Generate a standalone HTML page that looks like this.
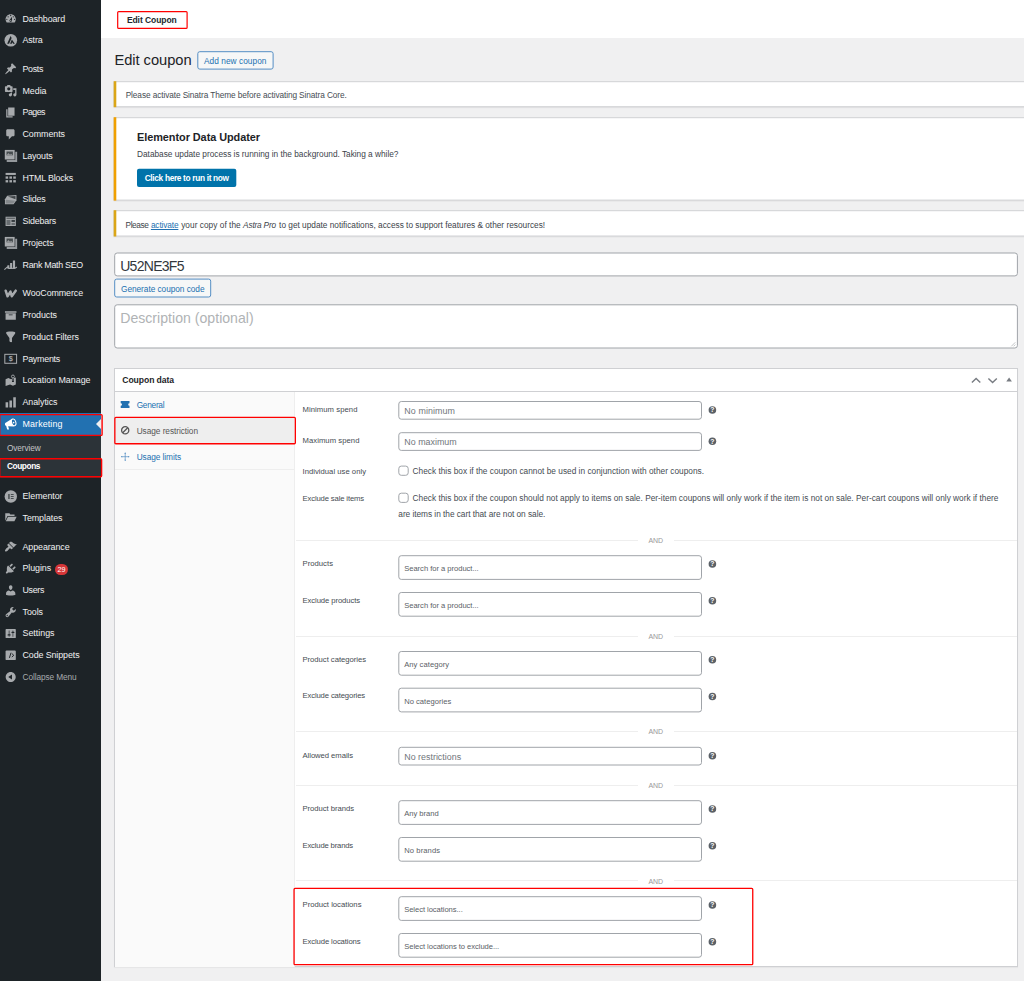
<!DOCTYPE html><html><head><meta charset="utf-8"><title>Edit coupon</title><style>
*{margin:0;padding:0;box-sizing:border-box}
html,body{width:1024px;height:981px;overflow:hidden;background:#f0f0f1;font-family:"Liberation Sans",sans-serif;}
.b{position:absolute}
.t{position:absolute;white-space:nowrap;line-height:1;font-family:"Liberation Sans",sans-serif;transform-origin:0 50%}
svg{position:absolute;overflow:visible}
</style></head><body>
<div class="b" style="left:0px;top:0px;width:101px;height:981px;background:#1d2327"></div>
<div class="b" style="left:101px;top:0px;width:923px;height:37.5px;background:#fff"></div>
<div class="b" style="left:0px;top:413.2px;width:101px;height:22.3px;background:#2271b1"></div>
<div class="b" style="left:0px;top:435.5px;width:101px;height:42px;background:#2c3338"></div>
<div class="b" style="left:54.9px;top:563.5px;width:13.2px;height:11.5px;background:#d63638;border-radius:6px"></div>
<div class="b" style="left:114px;top:367.7px;width:904px;height:599.8px;background:#fff;border:1px solid #cfd0d3;box-shadow:0 1px 1px rgba(0,0,0,.04)"></div>
<div class="b" style="left:115px;top:391px;width:902px;height:1px;background:#cfd0d3"></div>
<div class="b" style="left:115px;top:392px;width:180px;height:574.5px;background:#fafafa;border-right:1px solid #eee"></div>
<div class="b" style="left:115px;top:417px;width:180px;height:1px;background:#eee"></div>
<div class="b" style="left:115px;top:417.5px;width:180px;height:26.5px;background:#eee"></div>
<div class="b" style="left:115px;top:469px;width:179px;height:1px;background:#eee"></div>
<div class="b" style="left:296px;top:539.7px;width:721px;height:1px;background:#eee"></div>
<div class="b" style="left:638.2px;top:537.2px;width:35.7px;height:7px;background:#fff"></div>
<div class="b" style="left:296px;top:635.5px;width:721px;height:1px;background:#eee"></div>
<div class="b" style="left:638.2px;top:633px;width:35.7px;height:7px;background:#fff"></div>
<div class="b" style="left:296px;top:731.0px;width:721px;height:1px;background:#eee"></div>
<div class="b" style="left:638.2px;top:728.5px;width:35.7px;height:7px;background:#fff"></div>
<div class="b" style="left:296px;top:784.7px;width:721px;height:1px;background:#eee"></div>
<div class="b" style="left:638.2px;top:782.2px;width:35.7px;height:7px;background:#fff"></div>
<div class="b" style="left:296px;top:880.2px;width:721px;height:1px;background:#eee"></div>
<div class="b" style="left:638.2px;top:877.7px;width:35.7px;height:7px;background:#fff"></div>
<svg style="left:0;top:0" width="1024" height="981" viewBox="0 0 1024 981"><svg overflow="visible" x="96" y="418.9" width="5" height="10.4" viewBox="0 0 5 10"><path d="M5 0 L0 5 L5 10 Z" fill="#f0f0f1"/></svg><rect x="-0.30" y="414.60" width="102.40" height="20.80" rx="1" fill="none" stroke="#f00" stroke-width="1.4"/><rect x="-0.30" y="458.70" width="101.90" height="18.10" rx="1" fill="none" stroke="#f00" stroke-width="1.4"/><svg overflow="visible" x="4.3" y="12.30" width="12.8" height="12.8" viewBox="0 0 20 20"><path d="M3.76 16h12.48c1.1-1.37 1.76-3.11 1.76-5 0-4.42-3.58-8-8-8s-8 3.58-8 8c0 1.89.66 3.63 1.76 5zM10 4c.55 0 1 .45 1 1s-.45 1-1 1-1-.45-1-1 .45-1 1-1zM6 6c.55 0 1 .45 1 1s-.45 1-1 1-1-.45-1-1 .45-1 1-1zm8 0c.55 0 1 .45 1 1s-.45 1-1 1-1-.45-1-1 .45-1 1-1zm-5.37 5.55L12 7v6c0 1.1-.9 2-2 2s-2-.9-2-2c0-.57.24-1.08.63-1.45zM4 10c.55 0 1 .45 1 1s-.45 1-1 1-1-.45-1-1 .45-1 1-1zm12 0c.55 0 1 .45 1 1s-.45 1-1 1-1-.45-1-1 .45-1 1-1zm-5 3c0-.55-.45-1-1-1s-1 .45-1 1 .45 1 1 1 1-.45 1-1z" fill="#a7aaad" fill-rule="evenodd"/></svg><svg overflow="visible" x="4.5" y="33.90" width="12.6" height="12.6" viewBox="0 0 20 20"><circle cx="10" cy="10" r="10" fill="#a7aaad"/><path d="M9.7 3.3 L4.2 15.5 h3.1 l4-9z M11.7 9 l-2.9 6.500 h2.700 l1-2.300 1.100 2.300 h2.900z" fill="#1d2327"/></svg><svg overflow="visible" x="4.3" y="62.40" width="12.8" height="12.8" viewBox="0 0 20 20"><path d="M10.44 3.02l1.82-1.82 6.36 6.35-1.83 1.82c-1.05-.68-2.48-.57-3.41.36l-.75.75c-.92.93-1.04 2.35-.35 3.41l-1.83 1.82-2.41-2.41-2.8 2.79c-.42.42-3.38 2.71-3.8 2.29s1.86-3.39 2.28-3.81l2.79-2.79L4.1 9.36l1.83-1.82c1.05.69 2.48.57 3.4-.36l.75-.75c.93-.92 1.05-2.35.36-3.41z" fill="#a7aaad" fill-rule="evenodd"/></svg><svg overflow="visible" x="4.3" y="84.30" width="12.8" height="12.8" viewBox="0 0 20 20"><path d="M13 11V4c0-.55-.45-1-1-1h-1.67L9 1H5L3.67 3H2c-.55 0-1 .45-1 1v7c0 .55.45 1 1 1h10c.55 0 1-.45 1-1zM7 4.5c1.38 0 2.5 1.12 2.5 2.5S8.38 9.5 7 9.5 4.5 8.38 4.5 7 5.62 4.5 7 4.5zM14 6h5v10.5c0 1.38-1.12 2.5-2.5 2.5S14 17.88 14 16.5s1.120-2.5 2.5-2.5c.17 0 .34.02.5.05V9h-3V6zm-4 8.05V13h2v3.5c0 1.38-1.12 2.5-2.5 2.5S7 17.88 7 16.5 8.12 14 9.5 14c.17 0 .34.02.5.05z" fill="#a7aaad" fill-rule="evenodd"/></svg><svg overflow="visible" x="4.3" y="106.10" width="12.8" height="12.8" viewBox="0 0 20 20"><path d="M6 15V2h10v13H6zm-1 1h8v2H3V5h2v11z" fill="#a7aaad" fill-rule="evenodd"/></svg><svg overflow="visible" x="4.3" y="127.90" width="12.8" height="12.8" viewBox="0 0 20 20"><path d="M5 2h9c1.1 0 2 .9 2 2v7c0 1.1-.9 2-2 2h-2l-5 5v-5H5c-1.1 0-2-.9-2-2V4c0-1.1.9-2 2-2z" fill="#a7aaad" fill-rule="evenodd"/></svg><svg overflow="visible" x="4.6" y="149.60" width="12.8" height="12.8" viewBox="0 0 20 20"><path d="M16.600 3.300 h3 v16 H3.300 v-3 h13.300z" fill="#94989c"/><path d="M.3 .5 h15.400 v15 H.3z" fill="#a7aaad"/><path d="M3 3 h10 v6 H3z" fill="#1d2327" opacity=".7"/><path d="M3 9 L6 5.500 L8.500 8 L10 6.500 L13 9z" fill="#a7aaad" opacity=".8"/></svg><svg overflow="visible" x="4.3" y="171.30" width="12.8" height="12.8" viewBox="0 0 20 20"><rect x="2" y="2.5" width="16" height="3.2" fill="#a7aaad"/><rect x="2" y="8" width="4" height="3.6" fill="#a7aaad"/><rect x="8" y="8" width="4" height="3.6" fill="#a7aaad"/><rect x="14" y="8" width="4" height="3.6" fill="#a7aaad"/><rect x="2" y="13.8" width="4" height="3.6" fill="#a7aaad"/><rect x="8" y="13.8" width="4" height="3.6" fill="#a7aaad"/><rect x="14" y="13.8" width="4" height="3.6" fill="#a7aaad"/></svg><svg overflow="visible" x="4.3" y="193.10" width="12.8" height="12.8" viewBox="0 0 20 20"><path d="M1 9.5 L4.5 4 L19 3 V11 L14.5 17.5 H1z" fill="#a7aaad"/><path d="M5.5 5.3 L17.5 4.6 V9.8 L10 7z" fill="#1d2327" opacity=".75"/><path d="M2.3 10.5 V16.3 H13.8 L17 11.8z" fill="#1d2327" opacity=".25"/></svg><svg overflow="visible" x="4.3" y="214.80" width="12.8" height="12.8" viewBox="0 0 20 20"><rect x="2" y="3" width="16" height="14.5" fill="#a7aaad"/><rect x="3.4" y="4.4" width="13.2" height="2" fill="#1d2327" opacity=".55"/><rect x="3.4" y="8" width="6.3" height="8" fill="#1d2327" opacity=".45"/><rect x="11.2" y="8" width="5.4" height="3.2" fill="#1d2327" opacity=".8"/><rect x="11.2" y="12.6" width="5.4" height="3.4" fill="#1d2327" opacity=".45"/></svg><svg overflow="visible" x="4.6" y="236.60" width="12.8" height="12.8" viewBox="0 0 20 20"><path d="M16.600 3.300 h3 v16 H3.300 v-3 h13.300z" fill="#94989c"/><path d="M.3 .5 h15.400 v15 H.3z" fill="#a7aaad"/><path d="M3 3 h10 v6 H3z" fill="#1d2327" opacity=".7"/><path d="M3 9 L6 5.500 L8.500 8 L10 6.500 L13 9z" fill="#a7aaad" opacity=".8"/></svg><svg overflow="visible" x="4.2" y="258.30" width="12.8" height="12.8" viewBox="0 0 20 20"><path d="M5 11h3v5.500H5z M9.200 7.500h3.200v9H9.200z M13.600 3.500h3.400v13h-3.400z" fill="#a7aaad"/><path d="M.3 17.800 L5 13.500 L8 15.800 L17 15.500 L19.800 13.500" stroke="#a7aaad" stroke-width="1.800" fill="none"/></svg><svg overflow="visible" x="4.2" y="287.10" width="12.8" height="12.8" viewBox="0 0 20 20"><path d="M2.300 5.600 L5.200 14.300 L9.800 7 L11.800 14.300 L18 5.600" stroke="#a7aaad" stroke-width="3.900" fill="none" stroke-linejoin="round" stroke-linecap="round"/></svg><svg overflow="visible" x="4.3" y="308.80" width="12.8" height="12.8" viewBox="0 0 20 20"><path d="M19 4v2H1V4h18zM2 7h16v10H2V7zm11 3V9H7v1h6z" fill="#a7aaad" fill-rule="evenodd"/></svg><svg overflow="visible" x="4.3" y="330.60" width="12.8" height="12.8" viewBox="0 0 20 20"><path d="M3 4.5v-2s3.34-1 7-1 7 1 7 1v2l-5 7.03v6.97s-1.22-.09-2.25-.59S8 16.5 8 16.5v-4.97z" fill="#a7aaad" fill-rule="evenodd"/></svg><svg overflow="visible" x="4.3" y="352.40" width="12.8" height="12.8" viewBox="0 0 20 20"><rect x=".8" y="3" width="18.400" height="14" fill="none" stroke="#a7aaad" stroke-width="1.600"/><text x="10" y="14.200" font-size="11.500" font-weight="700" font-family="Liberation Sans" text-anchor="middle" fill="#a7aaad">$</text></svg><svg overflow="visible" x="4.3" y="374.20" width="12.8" height="12.8" viewBox="0 0 20 20"><path d="M2 8 L6.500 6 L10.500 8 L12 7.300 V12 h3 V6 L18 5 V16 L13.500 18 L9 16 L2 18.500z" fill="#a7aaad"/><circle cx="13.500" cy="3.600" r="2.300" fill="none" stroke="#a7aaad" stroke-width="1.400"/><path d="M13 5.500h1v5h-1z" fill="#a7aaad"/></svg><svg overflow="visible" x="4.3" y="395.90" width="12.8" height="12.8" viewBox="0 0 20 20"><path d="M18 18V2h-4v16h4zm-6 0V7H8v11h4zm-6 0v-8H2v8h4z" fill="#a7aaad" fill-rule="evenodd"/></svg><svg overflow="visible" x="4.3" y="417.60" width="12.8" height="12.8" viewBox="0 0 20 20"><path d="M1.500 8.500 L11.500 2 C10.500 6 12.500 12 15.500 14 L6 13.500 L7.500 18.500 H4.500 L3 13 C1 12.500 .5 10 1.500 8.500z" fill="#fff"/><ellipse cx="14.700" cy="7.500" rx="3.300" ry="5.500" transform="rotate(-18 14.700 7.500)" fill="none" stroke="#fff" stroke-width="1.500"/><circle cx="14.500" cy="7.800" r="1.300" fill="#fff"/></svg><svg overflow="visible" x="4.6" y="490.30" width="12.4" height="12.4" viewBox="0 0 20 20"><circle cx="10" cy="10" r="10" fill="#a7aaad"/><path d="M5.800 5.800h2.400v8.400H5.800z M10 5.800h4.600v1.800H10z M10 9.100h4.600v1.800H10z M10 12.400h4.600v1.800H10z" fill="#1d2327" opacity=".7"/></svg><svg overflow="visible" x="4.3" y="510.80" width="12.8" height="12.8" viewBox="0 0 20 20"><path d="M1.500 4 H8 L9.500 5.800 H16 V8 H5 L1.500 15.500z M5.800 9.200 H19.300 L15.800 16.500 H2.300z" fill="#a7aaad"/></svg><svg overflow="visible" x="4.3" y="540.40" width="12.8" height="12.8" viewBox="0 0 20 20"><path d="M14.48 11.06L7.41 3.99l1.5-1.5c.5-.56 2.3-.47 3.51.32 1.21.8 1.43 1.28 2.91 2.1 1.18.64 2.45 1.26 4.45.85zm-.71.71L6.7 4.7 4.93 6.47c-.39.39-.39 1.02 0 1.41l1.06 1.06c.39.39.39 1.03 0 1.42-.6.6-1.43 1.11-2.21 1.69-.35.26-.7.53-1.01.84C1.43 14.23.4 16.08 1.4 17.07c.99 1 2.84-.03 4.18-1.36.31-.31.58-.66.85-1.01.57-.78 1.08-1.61 1.69-2.21.39-.39 1.02-.39 1.41 0l1.06 1.06c.39.39 1.02.39 1.41 0z" fill="#a7aaad" fill-rule="evenodd"/></svg><svg overflow="visible" x="4.3" y="562.20" width="12.8" height="12.8" viewBox="0 0 20 20"><path d="M13.11 4.36L9.87 7.6 8 5.73l3.24-3.24c.35-.34 1.05-.2 1.56.32.52.51.66 1.21.31 1.55zm-8 1.77l.91-1.12 9.01 9.01-1.19.84c-.71.71-2.63 1.16-3.82 1.16H6.14L4.9 17.26c-.59.59-1.54.59-2.12 0-.59-.58-.59-1.53 0-2.12l1.24-1.24v-3.88c0-1.13.4-3.19 1.09-3.89zm7.26 3.97l3.24-3.24c.34-.35 1.04-.21 1.55.31.52.51.66 1.21.31 1.55l-3.24 3.25z" fill="#a7aaad" fill-rule="evenodd"/></svg><svg overflow="visible" x="4.3" y="584.00" width="12.8" height="12.8" viewBox="0 0 20 20"><path d="M10 9.25c-2.27 0-2.73-3.44-2.73-3.44C7 4.02 7.82 2 9.97 2c2.16 0 2.98 2.02 2.71 3.81 0 0-.41 3.44-2.68 3.44zm0 2.57L12.720 10c2.39 0 4.52 2.33 4.52 4.53v2.49s-3.65 1.13-7.24 1.13c-3.65 0-7.24-1.13-7.24-1.13v-2.49c0-2.25 1.940-4.48 4.470-4.48z" fill="#a7aaad" fill-rule="evenodd"/></svg><svg overflow="visible" x="4.3" y="605.60" width="12.8" height="12.8" viewBox="0 0 20 20"><path d="M16.68 9.77c-1.34 1.34-3.3 1.67-4.95.99l-5.41 6.52c-.99.99-2.59.99-3.58 0s-.99-2.59 0-3.57l6.52-5.42c-.68-1.65-.35-3.61.99-4.950 1.28-1.28 3.12-1.62 4.72-1.06l-2.89 2.89 2.82 2.82 2.86-2.87c.53 1.58.18 3.39-1.08 4.650zM3.81 16.21c.4.39 1.04.39 1.43 0 .4-.4.4-1.04 0-1.43-.39-.4-1.030-.4-1.430 0-.39.39-.39 1.03 0 1.43z" fill="#a7aaad" fill-rule="evenodd"/></svg><svg overflow="visible" x="4.3" y="627.20" width="12.8" height="12.8" viewBox="0 0 20 20"><path d="M18 16V4c0-.55-.45-1-1-1H3c-.55 0-1 .45-1 1v12c0 .55.45 1 1 1h14c.55 0 1-.45 1-1zM8 11h1c.55 0 1 .45 1 1s-.45 1-1 1H8v1.5c0 .28-.22.5-.5.5s-.5-.22-.5-.5V13H6c-.55 0-1-.45-1-1s.45-1 1-1h1V5.500c0-.28.22-.5.5-.5s.5.22.5.5V11zm5-2h-1c-.55 0-1-.45-1-1s.45-1 1-1h1V5.500c0-.28.22-.5.5-.5s.5.22.5.5V7h1c.55 0 1 .45 1 1s-.45 1-1 1h-1v5.500c0 .28-.22.5-.5.5s-.5-.22-.5-.5V9z" fill="#a7aaad" fill-rule="evenodd"/></svg><svg overflow="visible" x="4.3" y="648.90" width="12.8" height="12.8" viewBox="0 0 20 20"><rect x="2" y="2.500" width="16" height="15" rx="1.500" fill="#a7aaad"/><path d="M10.500 6 L8 14" stroke="#1d2327" stroke-width="1.500"/><path d="M11.800 7.300 L14.800 10 L11.800 12.700" stroke="#1d2327" stroke-width="1.500" fill="none"/></svg><svg overflow="visible" x="4.3" y="670.60" width="12.8" height="12.8" viewBox="0 0 20 20"><path d="M10 2.160c4.330 0 7.840 3.510 7.840 7.840s-3.510 7.840-7.840 7.840S2.160 14.330 2.160 10 5.670 2.160 10 2.160zm2 11.720V6.120L6.180 9.970z" fill="#a7aaad" fill-rule="evenodd"/></svg><rect x="117.70" y="11.60" width="69.40" height="16.80" rx="1" fill="none" stroke="#f00" stroke-width="1.2"/><rect x="197.80" y="51.70" width="75.30" height="17.40" rx="2" fill="#f6f7f7" stroke="#548ec4" stroke-width="1"/><rect x="113.50" y="82.20" width="915.50" height="26.00" rx="0" fill="rgba(0,0,0,.05)"/><rect x="114.00" y="81.70" width="914.50" height="25.00" rx="0" fill="#fff" stroke="#d0d1d4" stroke-width="1"/><rect x="113.70" y="81.20" width="2.60" height="26.00" rx="0" fill="#dba617"/><rect x="113.50" y="118.20" width="915.50" height="83.40" rx="0" fill="rgba(0,0,0,.05)"/><rect x="114.00" y="117.70" width="914.50" height="82.40" rx="0" fill="#fff" stroke="#d0d1d4" stroke-width="1"/><rect x="113.70" y="117.20" width="2.60" height="83.40" rx="0" fill="#f0a000"/><rect x="137.00" y="168.80" width="99.30" height="18.20" rx="2" fill="#0073aa"/><rect x="113.50" y="211.20" width="915.50" height="26.30" rx="0" fill="rgba(0,0,0,.05)"/><rect x="114.00" y="210.70" width="914.50" height="25.30" rx="0" fill="#fff" stroke="#d0d1d4" stroke-width="1"/><rect x="113.70" y="210.20" width="2.60" height="26.30" rx="0" fill="#dba617"/><rect x="114.70" y="253.00" width="902.70" height="22.90" rx="2.5" fill="#fff" stroke="#a0a4a9" stroke-width="1"/><rect x="114.70" y="279.10" width="96.00" height="17.90" rx="2" fill="#f6f7f7" stroke="#548ec4" stroke-width="1"/><rect x="114.70" y="304.80" width="902.70" height="43.20" rx="2.5" fill="#fff" stroke="#a0a4a9" stroke-width="1"/><svg overflow="visible" x="1009" y="340" width="7" height="7" viewBox="0 0 7 7"><path d="M6.300 2.300 L2.300 6.300 M6.300 4.600 L4.600 6.300" stroke="#9a9da1" stroke-width=".6" fill="none"/></svg><svg overflow="visible" x="971.1" y="377" width="10" height="7" viewBox="0 0 10 7"><path d="M.8 5.6 L5 1.4 L9.2 5.6" stroke="#787c82" stroke-width="1.4" fill="none"/></svg><svg overflow="visible" x="987.6" y="377" width="10" height="7" viewBox="0 0 10 7"><path d="M.8 1.4 L5 5.6 L9.2 1.4" stroke="#787c82" stroke-width="1.4" fill="none"/></svg><svg overflow="visible" x="1006.3" y="377.6" width="5.6" height="3.8" viewBox="0 0 5.6 3.8"><path d="M0 3.8 L2.8 0 L5.6 3.8 Z" fill="#787c82"/></svg><rect x="114.85" y="417.45" width="180.50" height="26.30" rx="1" fill="none" stroke="#f00" stroke-width="1.3"/><svg overflow="visible" x="120.7" y="401" width="8.8" height="7" viewBox="0 0 8.8 7"><path d="M0 0 H8.8 V2.2 A1.3 1.3 0 0 0 8.8 4.800 V7 H0 V4.800 A1.300 1.300 0 0 0 0 2.200 Z" fill="#2271b1"/></svg><svg overflow="visible" x="120.7" y="425.8" width="9" height="9" viewBox="0 0 9 9"><circle cx="4.5" cy="4.5" r="3.6" fill="none" stroke="#555" stroke-width="1.3"/><path d="M2 7 L7 2" stroke="#555" stroke-width="1.300"/></svg><svg overflow="visible" x="120.7" y="452.2" width="9" height="9" viewBox="0 0 9 9"><path d="M4.500 .5 V8.500 M.5 4.500 H8.500" stroke="#4a88c0" stroke-width=".65"/><path d="M3.700 1.500 L4.500 .2 L5.300 1.500z M3.700 7.500 L4.500 8.800 L5.300 7.500z M1.500 3.700 L.2 4.500 L1.500 5.300z M7.500 3.700 L8.800 4.500 L7.500 5.300z" fill="#4a88c0"/></svg><rect x="398.80" y="401.50" width="302.70" height="17.70" rx="2.5" fill="#fff" stroke="#a0a4a9" stroke-width="1"/><svg overflow="visible" x="708.2" y="405.8" width="8.400" height="8.400" viewBox="0 0 8.400 8.400"><circle cx="4.200" cy="4.200" r="3.800" fill="#5b6167"/><text x="4.200" y="6.600" font-size="6.800" font-weight="700" fill="#fff" text-anchor="middle" font-family="Liberation Sans">?</text></svg><rect x="398.80" y="432.70" width="302.70" height="17.70" rx="2.5" fill="#fff" stroke="#a0a4a9" stroke-width="1"/><svg overflow="visible" x="708.2" y="437.0" width="8.400" height="8.400" viewBox="0 0 8.400 8.400"><circle cx="4.200" cy="4.200" r="3.800" fill="#5b6167"/><text x="4.200" y="6.600" font-size="6.800" font-weight="700" fill="#fff" text-anchor="middle" font-family="Liberation Sans">?</text></svg><rect x="398.80" y="466.10" width="9.40" height="9.20" rx="2.5" fill="#fff" stroke="#a0a4a9" stroke-width="1"/><rect x="398.80" y="493.20" width="9.40" height="9.20" rx="2.5" fill="#fff" stroke="#a0a4a9" stroke-width="1"/><rect x="398.80" y="555.70" width="302.70" height="23.70" rx="2.5" fill="#fff" stroke="#a0a4a9" stroke-width="1"/><svg overflow="visible" x="708.2" y="559.8" width="8.400" height="8.400" viewBox="0 0 8.400 8.400"><circle cx="4.200" cy="4.200" r="3.800" fill="#5b6167"/><text x="4.200" y="6.600" font-size="6.800" font-weight="700" fill="#fff" text-anchor="middle" font-family="Liberation Sans">?</text></svg><rect x="398.80" y="592.50" width="302.70" height="23.70" rx="2.5" fill="#fff" stroke="#a0a4a9" stroke-width="1"/><svg overflow="visible" x="708.2" y="596.5999999999999" width="8.400" height="8.400" viewBox="0 0 8.400 8.400"><circle cx="4.200" cy="4.200" r="3.800" fill="#5b6167"/><text x="4.200" y="6.600" font-size="6.800" font-weight="700" fill="#fff" text-anchor="middle" font-family="Liberation Sans">?</text></svg><rect x="398.80" y="651.50" width="302.70" height="23.70" rx="2.5" fill="#fff" stroke="#a0a4a9" stroke-width="1"/><svg overflow="visible" x="708.2" y="655.5999999999999" width="8.400" height="8.400" viewBox="0 0 8.400 8.400"><circle cx="4.200" cy="4.200" r="3.800" fill="#5b6167"/><text x="4.200" y="6.600" font-size="6.800" font-weight="700" fill="#fff" text-anchor="middle" font-family="Liberation Sans">?</text></svg><rect x="398.80" y="688.20" width="302.70" height="23.70" rx="2.5" fill="#fff" stroke="#a0a4a9" stroke-width="1"/><svg overflow="visible" x="708.2" y="692.3" width="8.400" height="8.400" viewBox="0 0 8.400 8.400"><circle cx="4.200" cy="4.200" r="3.800" fill="#5b6167"/><text x="4.200" y="6.600" font-size="6.800" font-weight="700" fill="#fff" text-anchor="middle" font-family="Liberation Sans">?</text></svg><rect x="398.80" y="747.30" width="302.70" height="17.70" rx="2.5" fill="#fff" stroke="#a0a4a9" stroke-width="1"/><svg overflow="visible" x="708.2" y="751.5999999999999" width="8.400" height="8.400" viewBox="0 0 8.400 8.400"><circle cx="4.200" cy="4.200" r="3.800" fill="#5b6167"/><text x="4.200" y="6.600" font-size="6.800" font-weight="700" fill="#fff" text-anchor="middle" font-family="Liberation Sans">?</text></svg><rect x="398.80" y="800.70" width="302.70" height="23.70" rx="2.5" fill="#fff" stroke="#a0a4a9" stroke-width="1"/><svg overflow="visible" x="708.2" y="804.8" width="8.400" height="8.400" viewBox="0 0 8.400 8.400"><circle cx="4.200" cy="4.200" r="3.800" fill="#5b6167"/><text x="4.200" y="6.600" font-size="6.800" font-weight="700" fill="#fff" text-anchor="middle" font-family="Liberation Sans">?</text></svg><rect x="398.80" y="837.50" width="302.70" height="23.70" rx="2.5" fill="#fff" stroke="#a0a4a9" stroke-width="1"/><svg overflow="visible" x="708.2" y="841.5999999999999" width="8.400" height="8.400" viewBox="0 0 8.400 8.400"><circle cx="4.200" cy="4.200" r="3.800" fill="#5b6167"/><text x="4.200" y="6.600" font-size="6.800" font-weight="700" fill="#fff" text-anchor="middle" font-family="Liberation Sans">?</text></svg><rect x="398.80" y="896.70" width="302.70" height="23.70" rx="2.5" fill="#fff" stroke="#a0a4a9" stroke-width="1"/><svg overflow="visible" x="708.2" y="900.8" width="8.400" height="8.400" viewBox="0 0 8.400 8.400"><circle cx="4.200" cy="4.200" r="3.800" fill="#5b6167"/><text x="4.200" y="6.600" font-size="6.800" font-weight="700" fill="#fff" text-anchor="middle" font-family="Liberation Sans">?</text></svg><rect x="398.80" y="933.50" width="302.70" height="23.70" rx="2.5" fill="#fff" stroke="#a0a4a9" stroke-width="1"/><svg overflow="visible" x="708.2" y="937.5999999999999" width="8.400" height="8.400" viewBox="0 0 8.400 8.400"><circle cx="4.200" cy="4.200" r="3.800" fill="#5b6167"/><text x="4.200" y="6.600" font-size="6.800" font-weight="700" fill="#fff" text-anchor="middle" font-family="Liberation Sans">?</text></svg><rect x="294.05" y="888.45" width="458.70" height="76.20" rx="1" fill="none" stroke="#f00" stroke-width="1.3"/></svg>
<span class="t" id="t0" style="left:22.5px;top:14.52px;font-size:8.9px;color:#f0f0f1;letter-spacing:-0.102px;">Dashboard</span>
<span class="t" id="t1" style="left:22.5px;top:36.02px;font-size:8.9px;color:#f0f0f1;letter-spacing:-0.144px;">Astra</span>
<span class="t" id="t2" style="left:22.5px;top:64.62px;font-size:8.9px;color:#f0f0f1;letter-spacing:-0.341px;">Posts</span>
<span class="t" id="t3" style="left:22.5px;top:86.52px;font-size:8.9px;color:#f0f0f1;letter-spacing:-0.037px;">Media</span>
<span class="t" id="t4" style="left:22.5px;top:108.32px;font-size:8.9px;color:#f0f0f1;letter-spacing:-0.534px;">Pages</span>
<span class="t" id="t5" style="left:22.5px;top:130.12px;font-size:8.9px;color:#f0f0f1;letter-spacing:-0.051px;">Comments</span>
<span class="t" id="t6" style="left:22.5px;top:151.82px;font-size:8.9px;color:#f0f0f1;letter-spacing:-0.156px;">Layouts</span>
<span class="t" id="t7" style="left:22.5px;top:173.52px;font-size:8.9px;color:#f0f0f1;letter-spacing:-0.176px;">HTML Blocks</span>
<span class="t" id="t8" style="left:22.5px;top:195.32px;font-size:8.9px;color:#f0f0f1;letter-spacing:-0.198px;">Slides</span>
<span class="t" id="t9" style="left:22.5px;top:217.02px;font-size:8.9px;color:#f0f0f1;letter-spacing:-0.191px;">Sidebars</span>
<span class="t" id="t10" style="left:22.5px;top:238.82px;font-size:8.9px;color:#f0f0f1;letter-spacing:-0.133px;">Projects</span>
<span class="t" id="t11" style="left:22.5px;top:260.52px;font-size:8.9px;color:#f0f0f1;letter-spacing:-0.279px;">Rank Math SEO</span>
<span class="t" id="t12" style="left:22.5px;top:289.32px;font-size:8.9px;color:#f0f0f1;letter-spacing:-0.089px;">WooCommerce</span>
<span class="t" id="t13" style="left:22.5px;top:311.02px;font-size:8.9px;color:#f0f0f1;letter-spacing:-0.066px;">Products</span>
<span class="t" id="t14" style="left:22.5px;top:332.82px;font-size:8.9px;color:#f0f0f1;letter-spacing:-0.048px;">Product Filters</span>
<span class="t" id="t15" style="left:22.5px;top:354.62px;font-size:8.9px;color:#f0f0f1;letter-spacing:-0.246px;">Payments</span>
<span class="t" id="t16" style="left:22.5px;top:376.42px;font-size:8.9px;color:#f0f0f1;letter-spacing:-0.006px;">Location Manage</span>
<span class="t" id="t17" style="left:22.5px;top:398.12px;font-size:8.9px;color:#f0f0f1;letter-spacing:-0.057px;">Analytics</span>
<span class="t" id="t18" style="left:22.5px;top:419.82px;font-size:8.9px;color:#fff;letter-spacing:0.115px;">Marketing</span>
<span class="t" id="t19" style="left:7px;top:444.10px;font-size:8.3px;color:#c3c4c7;letter-spacing:-0.135px;">Overview</span>
<span class="t" id="t20" style="left:7px;top:462.10px;font-size:8.3px;color:#fff;font-weight:700;letter-spacing:-0.422px;">Coupons</span>
<span class="t" id="t21" style="left:22.5px;top:492.32px;font-size:8.9px;color:#f0f0f1;letter-spacing:-0.050px;">Elementor</span>
<span class="t" id="t22" style="left:22.5px;top:513.82px;font-size:8.9px;color:#f0f0f1;letter-spacing:-0.050px;">Templates</span>
<span class="t" id="t23" style="left:22.5px;top:542.62px;font-size:8.9px;color:#f0f0f1;letter-spacing:-0.087px;">Appearance</span>
<span class="t" id="t24" style="left:22.5px;top:564.42px;font-size:8.9px;color:#f0f0f1;letter-spacing:-0.087px;">Plugins</span>
<span class="t" id="t25" style="left:22.5px;top:586.22px;font-size:8.9px;color:#f0f0f1;letter-spacing:-0.338px;">Users</span>
<span class="t" id="t26" style="left:22.5px;top:607.82px;font-size:8.9px;color:#f0f0f1;letter-spacing:-0.044px;">Tools</span>
<span class="t" id="t27" style="left:22.5px;top:629.42px;font-size:8.9px;color:#f0f0f1;letter-spacing:-0.010px;">Settings</span>
<span class="t" id="t28" style="left:22.5px;top:651.12px;font-size:8.9px;color:#f0f0f1;letter-spacing:-0.095px;">Code Snippets</span>
<span class="t" id="t29" style="left:22.5px;top:673.10px;font-size:8.3px;color:#a7aaad;letter-spacing:-0.103px;">Collapse Menu</span>
<span class="t" id="t30" style="left:57.6px;top:565.92px;font-size:7.2px;color:#fff;letter-spacing:-0.050px;">29</span>
<span class="t" id="t31" style="left:126.9px;top:15.61px;font-size:8.5px;color:#23282d;font-weight:700;letter-spacing:-0.065px;">Edit Coupon</span>
<span class="t" id="t32" style="left:114.5px;top:53.39px;font-size:14.7px;color:#1d2327;letter-spacing:-0.053px;">Edit coupon</span>
<span class="t" id="t33" style="left:204px;top:56.90px;font-size:8.3px;color:#2271b1;letter-spacing:0.048px;">Add new coupon</span>
<span class="t" id="t34" style="left:125.7px;top:91.10px;font-size:8.3px;color:#464c53;letter-spacing:-0.102px;">Please activate Sinatra Theme before activating Sinatra Core.</span>
<span class="t" id="t35" style="left:137px;top:132.08px;font-size:10.9px;color:#1d2327;font-weight:700;letter-spacing:-0.048px;">Elementor Data Updater</span>
<span class="t" id="t36" style="left:137px;top:149.90px;font-size:8.3px;color:#3c434a;letter-spacing:-0.012px;">Database update process is running in the background. Taking a while?</span>
<span class="t" id="t37" style="left:144.7px;top:174.30px;font-size:8.3px;color:#fff;font-weight:700;letter-spacing:-0.323px;">Click here to run it now</span>
<span class="t" id="t38" style="left:125.6px;top:220.50px;font-size:8.3px;color:#3c434a;letter-spacing:-0.429px;">Please</span>
<span class="t" id="t39" style="left:150.9px;top:220.50px;font-size:8.3px;color:#2271b1;letter-spacing:-0.137px;text-decoration:underline;text-decoration-thickness:.6px;text-underline-offset:1px;">activate</span>
<span class="t" id="t40" style="left:181.2px;top:220.50px;font-size:8.3px;color:#3c434a;letter-spacing:0.028px;">your copy of the</span>
<span class="t" id="t41" style="left:243.1px;top:220.50px;font-size:8.3px;color:#3c434a;font-style:italic;letter-spacing:-0.199px;">Astra Pro</span>
<span class="t" id="t42" style="left:279.1px;top:220.50px;font-size:8.3px;color:#3c434a;letter-spacing:-0.008px;">to get update notifications, access to support features &amp; other resources!</span>
<span class="t" id="t43" style="left:120.2px;top:258.72px;font-size:14px;color:#32373c;letter-spacing:-0.708px;">U52NE3F5</span>
<span class="t" id="t44" style="left:121px;top:284.90px;font-size:8.3px;color:#2271b1;letter-spacing:-0.046px;">Generate coupon code</span>
<span class="t" id="t45" style="left:120.2px;top:310.67px;font-size:14.1px;color:#b0b3b5;letter-spacing:0.015px;">Description (optional)</span>
<span class="t" id="t46" style="left:122.3px;top:376.16px;font-size:8.6px;color:#1d2327;font-weight:700;letter-spacing:-0.074px;">Coupon data</span>
<span class="t" id="t47" style="left:136.7px;top:401.00px;font-size:8.3px;color:#2271b1;letter-spacing:-0.276px;">General</span>
<span class="t" id="t48" style="left:136.7px;top:427.00px;font-size:8.3px;color:#555;letter-spacing:-0.057px;">Usage restriction</span>
<span class="t" id="t49" style="left:136.7px;top:453.00px;font-size:8.3px;color:#2271b1;letter-spacing:-0.074px;">Usage limits</span>
<span class="t" id="t50" style="left:302.5px;top:405.78px;font-size:7.7px;color:#454b52;letter-spacing:0.056px;">Minimum spend</span>
<span class="t" id="t51" style="left:404.3px;top:407.22px;font-size:8.9px;color:#70757b;letter-spacing:0.099px;">No minimum</span>
<span class="t" id="t52" style="left:302.5px;top:436.98px;font-size:7.7px;color:#454b52;letter-spacing:0.046px;">Maximum spend</span>
<span class="t" id="t53" style="left:404.3px;top:438.42px;font-size:8.9px;color:#70757b;letter-spacing:0.012px;">No maximum</span>
<span class="t" id="t54" style="left:302.5px;top:467.88px;font-size:7.7px;color:#454b52;letter-spacing:0.013px;">Individual use only</span>
<span class="t" id="t55" style="left:412.5px;top:466.80px;font-size:8.3px;color:#454b52;letter-spacing:0.012px;">Check this box if the coupon cannot be used in conjunction with other coupons.</span>
<span class="t" id="t56" style="left:302.5px;top:494.88px;font-size:7.7px;color:#454b52;letter-spacing:-0.144px;">Exclude sale items</span>
<span class="t" id="t57" style="left:412.5px;top:494.10px;font-size:8.3px;color:#454b52;letter-spacing:0.010px;">Check this box if the coupon should not apply to items on sale. Per-item coupons will only work if the item is not on sale. Per-cart coupons will only work if there</span>
<span class="t" id="t58" style="left:398.3px;top:510.20px;font-size:8.3px;color:#454b52;letter-spacing:-0.035px;">are items in the cart that are not on sale.</span>
<span class="t" id="t59" style="left:648.5px;top:537.01px;font-size:7px;color:#999;letter-spacing:-0.060px;">AND</span>
<span class="t" id="t60" style="left:302.5px;top:559.78px;font-size:7.7px;color:#454b52;letter-spacing:0.020px;">Products</span>
<span class="t" id="t61" style="left:404.2px;top:565.23px;font-size:7.6px;color:#5a6066;letter-spacing:-0.028px;">Search for a product...</span>
<span class="t" id="t62" style="left:302.5px;top:596.58px;font-size:7.7px;color:#454b52;letter-spacing:-0.093px;">Exclude products</span>
<span class="t" id="t63" style="left:404.2px;top:602.03px;font-size:7.6px;color:#5a6066;letter-spacing:-0.028px;">Search for a product...</span>
<span class="t" id="t64" style="left:648.5px;top:632.81px;font-size:7px;color:#999;letter-spacing:-0.060px;">AND</span>
<span class="t" id="t65" style="left:302.5px;top:655.58px;font-size:7.7px;color:#454b52;letter-spacing:-0.034px;">Product categories</span>
<span class="t" id="t66" style="left:404.2px;top:661.03px;font-size:7.6px;color:#5a6066;letter-spacing:0.056px;">Any category</span>
<span class="t" id="t67" style="left:302.5px;top:692.28px;font-size:7.7px;color:#454b52;letter-spacing:-0.137px;">Exclude categories</span>
<span class="t" id="t68" style="left:404.2px;top:697.73px;font-size:7.6px;color:#5a6066;letter-spacing:0.011px;">No categories</span>
<span class="t" id="t69" style="left:648.5px;top:728.31px;font-size:7px;color:#999;letter-spacing:-0.060px;">AND</span>
<span class="t" id="t70" style="left:302.5px;top:751.58px;font-size:7.7px;color:#454b52;letter-spacing:-0.056px;">Allowed emails</span>
<span class="t" id="t71" style="left:404.3px;top:753.02px;font-size:8.9px;color:#70757b;letter-spacing:0.005px;">No restrictions</span>
<span class="t" id="t72" style="left:648.5px;top:782.01px;font-size:7px;color:#999;letter-spacing:-0.060px;">AND</span>
<span class="t" id="t73" style="left:302.5px;top:804.78px;font-size:7.7px;color:#454b52;letter-spacing:-0.046px;">Product brands</span>
<span class="t" id="t74" style="left:404.2px;top:810.23px;font-size:7.6px;color:#5a6066;letter-spacing:-0.014px;">Any brand</span>
<span class="t" id="t75" style="left:302.5px;top:841.58px;font-size:7.7px;color:#454b52;letter-spacing:-0.179px;">Exclude brands</span>
<span class="t" id="t76" style="left:404.2px;top:847.03px;font-size:7.6px;color:#5a6066;letter-spacing:0.106px;">No brands</span>
<span class="t" id="t77" style="left:648.5px;top:877.51px;font-size:7px;color:#999;letter-spacing:-0.060px;">AND</span>
<span class="t" id="t78" style="left:302.5px;top:900.78px;font-size:7.7px;color:#454b52;letter-spacing:0.001px;">Product locations</span>
<span class="t" id="t79" style="left:404.2px;top:906.23px;font-size:7.6px;color:#5a6066;letter-spacing:-0.053px;">Select locations...</span>
<span class="t" id="t80" style="left:302.5px;top:937.58px;font-size:7.7px;color:#454b52;letter-spacing:-0.108px;">Exclude locations</span>
<span class="t" id="t81" style="left:404.2px;top:943.03px;font-size:7.6px;color:#5a6066;letter-spacing:-0.042px;">Select locations to exclude...</span>
</body></html>
